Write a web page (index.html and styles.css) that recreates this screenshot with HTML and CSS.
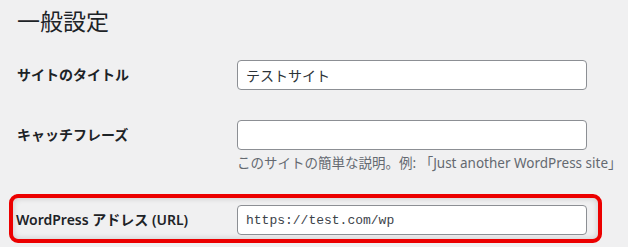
FILE: index.html
```html
<!DOCTYPE html>
<html lang="ja">
<head>
  <meta charset="UTF-8">
  <meta name="viewport" content="width=device-width, initial-scale=1.0">
  <title>一般設定</title>
  <link rel="stylesheet" href="styles.css">
</head>
<body>
  <div class="wrap">
    <h1>一般設定</h1>

    <div class="row">
      <label class="row-label" for="blogname">サイトのタイトル</label>
      <div class="row-field">
        <input id="blogname" class="regular-text" type="text" value="テストサイト">
      </div>
    </div>

    <div class="row row-desc">
      <label class="row-label" for="blogdescription">キャッチフレーズ</label>
      <div class="row-field">
        <input id="blogdescription" class="regular-text" type="text" value="">
        <p class="description">このサイトの簡単な説明。例: 「Just another WordPress site」</p>
      </div>
    </div>

    <div class="row highlight">
      <label class="row-label" for="siteurl">WordPress アドレス (URL)</label>
      <div class="row-field">
        <input id="siteurl" class="regular-text code" type="text" value="https://test.com/wp">
      </div>
    </div>
  </div>
</body>
</html>
```

FILE: styles.css
```css
body {
  margin: 0;
  background-color: #f0f0f1;
  color: #1d2327;
  font-family: "Noto Sans", "Noto Sans CJK JP", sans-serif;
  overflow: hidden;
}

.wrap {
  padding-left: 17px;
}

h1 {
  margin: 6px 0 9px;
  font-size: 23px;
  font-weight: 400;
  line-height: 30px;
}

.row {
  display: flex;
  align-items: flex-start;
  padding: 15px 0;
}

.row-label {
  width: 220px;
  flex-shrink: 0;
  font-size: 14px;
  font-weight: 700;
  line-height: 30px;
}

.regular-text {
  box-sizing: border-box;
  width: 350px;
  height: 30px;
  margin: 0;
  padding: 0 8px;
  border: 1px solid #8c8f94;
  border-radius: 4px;
  background-color: #fff;
  color: #2c3338;
  font-family: "Noto Sans CJK JP", sans-serif;
  font-size: 14px;
}

.code {
  font-family: "Liberation Mono", monospace;
  font-size: 13px;
  color: #3c434a;
}

.row-desc {
  padding-bottom: 0;
}

.description {
  margin: 3px 0 0;
  color: #646970;
  font-size: 13.5px;
  line-height: 20px;
  white-space: nowrap;
}

.highlight {
  box-sizing: border-box;
  width: 593px;
  margin: 21px 0 0 -8px;
  padding: 7px 0 4px 3px;
  border: 4px solid #ec0000;
  border-radius: 9px;
  box-shadow: inset 0 0 6px rgba(0, 0, 0, 0.18);
}

.highlight .row-label {
  width: 221px;
  font-weight: 600;
}
```
